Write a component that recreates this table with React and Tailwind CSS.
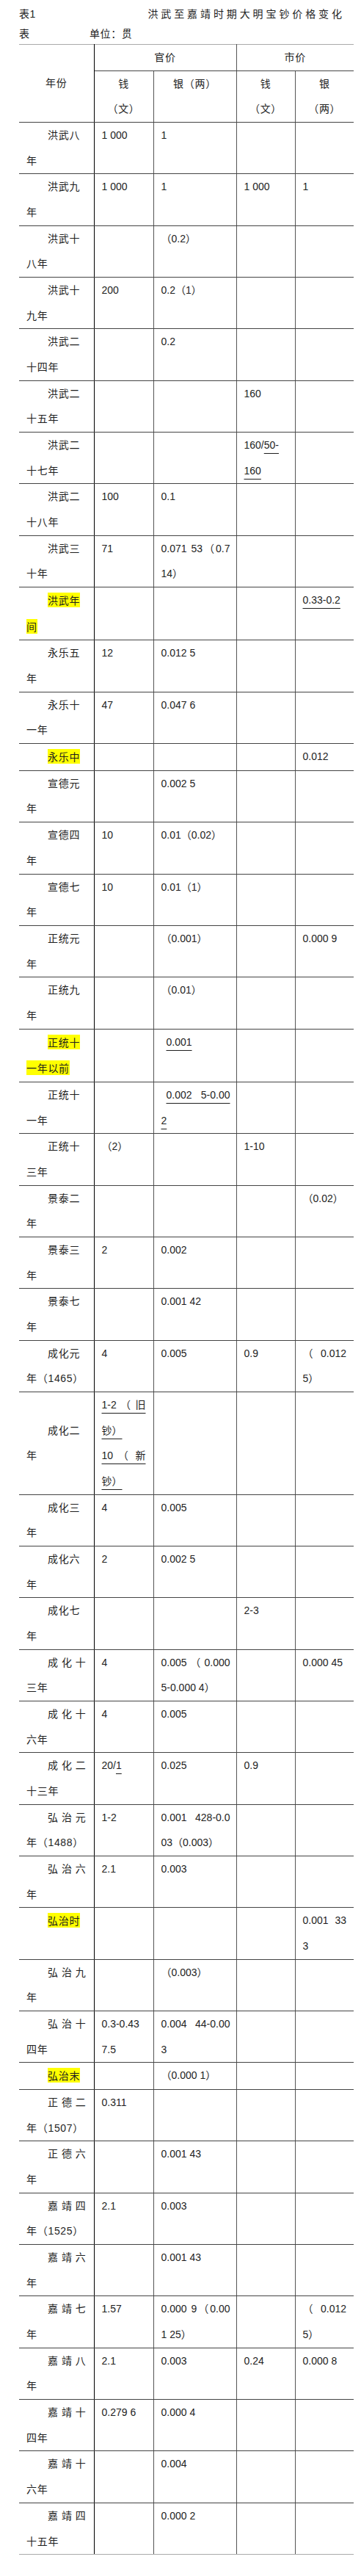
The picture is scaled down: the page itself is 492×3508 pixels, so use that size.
import React from "react";

const ul = "underline decoration-[1.4px] underline-offset-[6px]";
const U = ({ children }) => <span className={ul}>{children}</span>;
const J = (t, pl) => ({ j: true, t, pl });
const P = (t) => ({ j: false, t, pl: true });

// n: first column lines, c: the four value cells, j: stretch first line, hl: yellow mark
const rows = [
  { n: ["洪武八", "年"], c: [["1 000"], ["1"], [], []] },
  { n: ["洪武九", "年"], c: [["1 000"], ["1"], ["1 000"], ["1"]] },
  { n: ["洪武十", "八年"], c: [[], ["（0.2）"], [], []] },
  { n: ["洪武十", "九年"], c: [["200"], ["0.2（1）"], [], []] },
  { n: ["洪武二", "十四年"], c: [[], ["0.2"], [], []] },
  { n: ["洪武二", "十五年"], c: [[], [], ["160"], []] },
  { n: ["洪武二", "十七年"], c: [[], [], [<>160/<U>50-</U></>, <U>160</U>], []] },
  { n: ["洪武二", "十八年"], c: [["100"], ["0.1"], [], []] },
  { n: ["洪武三", "十年"], c: [["71"], [J("0.071 53（0.7"), "14）"], [], []] },
  { n: ["洪武年", "间"], hl: true, c: [[], [], [], [<U>0.33-0.2</U>]] },
  { n: ["永乐五", "年"], c: [["12"], ["0.012 5"], [], []] },
  { n: ["永乐十", "一年"], c: [["47"], ["0.047 6"], [], []] },
  { n: ["永乐中"], hl: true, c: [[], [], [], ["0.012"]] },
  { n: ["宣德元", "年"], c: [[], ["0.002 5"], [], []] },
  { n: ["宣德四", "年"], c: [["10"], ["0.01（0.02）"], [], []] },
  { n: ["宣德七", "年"], c: [["10"], ["0.01（1）"], [], []] },
  { n: ["正统元", "年"], c: [[], ["（0.001）"], [], ["0.000 9"]] },
  { n: ["正统九", "年"], c: [[], ["（0.01）"], [], []] },
  { n: ["正统十", "一年以前"], hl: true, c: [[], [P(<U>0.001</U>)], [], []] },
  { n: ["正统十", "一年"], c: [[], [J(<U>0.002 5-0.00</U>, true), <U>2</U>], [], []] },
  { n: ["正统十", "三年"], c: [["（2）"], [], ["1-10"], []] },
  { n: ["景泰二", "年"], c: [[], [], [], ["（0.02）"]] },
  { n: ["景泰三", "年"], c: [["2"], ["0.002"], [], []] },
  { n: ["景泰七", "年"], c: [[], ["0.001 42"], [], []] },
  { n: ["成化元", "年（1465）"], c: [["4"], ["0.005"], ["0.9"], [J("（ 0.012"), "5）"]] },
  {
    n: ["成化二", "年"],
    mid: true,
    c: [
      [J(<U>1-2 （ 旧</U>), <U>钞）</U>, J(<U>10 （ 新</U>), <U>钞）</U>],
      [],
      [],
      [],
    ],
  },
  { n: ["成化三", "年"], c: [["4"], ["0.005"], [], []] },
  { n: ["成化六", "年"], c: [["2"], ["0.002 5"], [], []] },
  { n: ["成化七", "年"], c: [[], [], ["2-3"], []] },
  { n: ["成化十", "三年"], j: true, c: [["4"], [J("0.005 （ 0.000"), "5-0.000 4）"], [], ["0.000 45"]] },
  { n: ["成化十", "六年"], j: true, c: [["4"], ["0.005"], [], []] },
  { n: ["成化二", "十三年"], j: true, c: [[<>20/<U>1</U></>], ["0.025"], ["0.9"], []] },
  { n: ["弘治元", "年（1488）"], j: true, c: [["1-2"], [J("0.001 428-0.0"), "03（0.003）"], [], []] },
  { n: ["弘治六", "年"], j: true, c: [["2.1"], ["0.003"], [], []] },
  { n: ["弘治时"], hl: true, c: [[], [], [], [J("0.001 33"), "3"]] },
  { n: ["弘治九", "年"], j: true, c: [[], ["（0.003）"], [], []] },
  { n: ["弘治十", "四年"], j: true, c: [["0.3-0.43", "7.5"], [J("0.004 44-0.00"), "3"], [], []] },
  { n: ["弘治末"], hl: true, c: [[], ["（0.000 1）"], [], []] },
  { n: ["正德二", "年（1507）"], j: true, c: [["0.311"], [], [], []] },
  { n: ["正德六", "年"], j: true, c: [[], ["0.001 43"], [], []] },
  { n: ["嘉靖四", "年（1525）"], j: true, c: [["2.1"], ["0.003"], [], []] },
  { n: ["嘉靖六", "年"], j: true, c: [[], ["0.001 43"], [], []] },
  { n: ["嘉靖七", "年"], j: true, c: [["1.57"], [J("0.000 9（0.00"), "1 25）"], [], [J("（ 0.012"), "5）"]] },
  { n: ["嘉靖八", "年"], j: true, c: [["2.1"], ["0.003"], ["0.24"], ["0.000 8"]] },
  { n: ["嘉靖十", "四年"], j: true, c: [["0.279 6"], ["0.000 4"], [], []] },
  { n: ["嘉靖十", "六年"], j: true, c: [[], ["0.004"], [], []] },
  { n: ["嘉靖四", "十五年"], j: true, c: [[], ["0.000 2"], [], []] },
];

function Line({ l }) {
  const obj = l && typeof l === "object" && l.j !== undefined;
  const t = obj ? l.t : l;
  const just = obj && l.j;
  return (
    <div
      className={`${just ? "text-justify [text-align-last:justify]" : "whitespace-nowrap"} ${
        obj && l.pl ? "pl-[7px]" : ""
      }`}
    >
      {t}
    </div>
  );
}

function NameCell({ row, last }) {
  return (
    <td
      className={`px-[10px] tracking-[0.7px] border-r border-r-black border-b ${
        last ? "border-b-[#aaa]" : "border-b-[#444]"
      } ${row.mid ? "align-middle" : "align-top"}`}
    >
      {row.n.map((t, i) => (
        <div
          key={i}
          className={`${i === 0 ? "indent-[29px]" : ""} ${
            i === 0 && row.j ? "text-justify [text-align-last:justify]" : "whitespace-nowrap"
          }`}
        >
          {row.hl ? (
            <span className="bg-[#ffff00] font-['Noto_Sans_CJK_SC',sans-serif]">{t}</span>
          ) : (
            t
          )}
        </div>
      ))}
    </td>
  );
}

const th = "font-normal text-center tracking-[0.7px]";

export default function App() {
  return (
    <div className="w-[492px] min-h-[3508px] bg-white text-[#1e1e1e] font-['Liberation_Sans','Noto_Sans_CJK_SC',sans-serif] text-[14px]">
      <div className="px-[26px] pt-[6px] leading-[27px] tracking-[0.6px]">
        <div className="flex justify-between">
          <span>表1</span>
          <span className="tracking-[3.9px] mr-[-3.9px]">洪武至嘉靖时期大明宝钞价格变化</span>
        </div>
        <div className="flex">
          <span className="w-[96px]">表</span>
          <span>单位：贯</span>
        </div>
      </div>

      <table className="ml-[26px] w-[456px] table-fixed border-collapse leading-[34.67px]">
        <colgroup>
          <col className="w-[102px]" />
          <col className="w-[81px]" />
          <col className="w-[113px]" />
          <col className="w-[80px]" />
          <col className="w-[80px]" />
        </colgroup>
        <thead>
          <tr>
            <th
              rowSpan={2}
              className={`${th} align-middle border-t border-t-[#aaa] border-r border-r-black border-b border-b-[#444]`}
            >
              年份
            </th>
            <th
              colSpan={2}
              className={`${th} align-top border-t border-t-[#aaa] border-r border-r-[#555] border-b border-b-[#444]`}
            >
              官价
            </th>
            <th colSpan={2} className={`${th} align-top border-t border-t-[#aaa] border-b border-b-[#444]`}>
              市价
            </th>
          </tr>
          <tr>
            <th className={`${th} align-top border-r border-r-[#555] border-b border-b-[#444]`}>
              钱<br />（文）
            </th>
            <th className={`${th} align-top border-r border-r-[#555] border-b border-b-[#444]`}>银（两）</th>
            <th className={`${th} align-top border-r border-r-[#555] border-b border-b-[#444]`}>
              钱<br />（文）
            </th>
            <th className={`${th} align-top border-b border-b-[#444]`}>
              银<br />（两）
            </th>
          </tr>
        </thead>
        <tbody>
          {rows.map((row, ri) => {
            const last = ri === rows.length - 1;
            return (
              <tr key={ri}>
                <NameCell row={row} last={last} />
                {row.c.map((lines, ci) => (
                  <td
                    key={ci}
                    className={`pl-[10px] ${ci === 1 ? "pr-[8px]" : "pr-[10px]"} align-top border-b ${
                      last ? "border-b-[#aaa]" : "border-b-[#444]"
                    } ${ci < 3 ? "border-r border-r-[#555]" : ""}`}
                  >
                    {lines.map((l, li) => (
                      <Line key={li} l={l} />
                    ))}
                  </td>
                ))}
              </tr>
            );
          })}
        </tbody>
      </table>
    </div>
  );
}
